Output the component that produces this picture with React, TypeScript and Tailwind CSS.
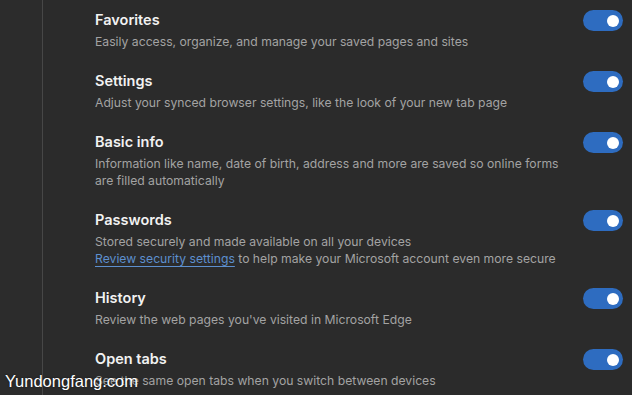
import React from "react";

type Item = { title: string; desc: React.ReactNode };

const items: Item[] = [
  { title: "Favorites", desc: "Easily access, organize, and manage your saved pages and sites" },
  { title: "Settings", desc: "Adjust your synced browser settings, like the look of your new tab page" },
  {
    title: "Basic info",
    desc: (
      <>
        Information like name, date of birth, address and more are saved so online forms
        <br />
        are filled automatically
      </>
    ),
  },
  {
    title: "Passwords",
    desc: (
      <>
        Stored securely and made available on all your devices
        <br />
        <span className="text-[#5d8fce] underline decoration-[#5d8fce] underline-offset-[3px]">Review security settings</span> to help make your Microsoft account even more secure
      </>
    ),
  },
  { title: "History", desc: "Review the web pages you've visited in Microsoft Edge" },
  { title: "Open tabs", desc: "See the same open tabs when you switch between devices" },
];

function Toggle() {
  return (
    <div className="w-[40px] h-[21px] rounded-full bg-[#2e6cc0] flex items-center justify-end pr-[4px] shrink-0">
      <div className="w-[12px] h-[12px] rounded-full bg-white" />
    </div>
  );
}

export default function App() {
  return (
    <div
      className="relative w-[632px] h-[395px] overflow-hidden bg-[#2b2b2b] flex"
      style={{ fontFamily: "Inter, 'Open Sans', sans-serif" }}
    >
      <div className="w-[43px] shrink-0 bg-[#2c2c2c] border-r border-[#474747]" />
      <div className="flex-1 flex flex-col pl-[52px] pr-[9px] pt-[9px] gap-[20px]">
        {items.map((it) => (
          <div key={it.title} className="flex items-start justify-between">
            <div className="flex flex-col">
              <div className="text-[14.5px] leading-[22px] font-semibold text-[#f2f2f2]">{it.title}</div>
              <div className="text-[12.2px] leading-[17px] text-[#a3a3a3] mt-[2px]">{it.desc}</div>
            </div>
            <div className="pt-[1px]">
              <Toggle />
            </div>
          </div>
        ))}
      </div>
      <div
        className="absolute left-[5px] top-[370px] text-[16.5px] leading-[22px] text-white"
        style={{ fontFamily: "'Liberation Sans', Arial, sans-serif", textShadow: "0 0 2px rgba(0,0,0,0.6)" }}
      >
        Yundongfang.com
      </div>
    </div>
  );
}
